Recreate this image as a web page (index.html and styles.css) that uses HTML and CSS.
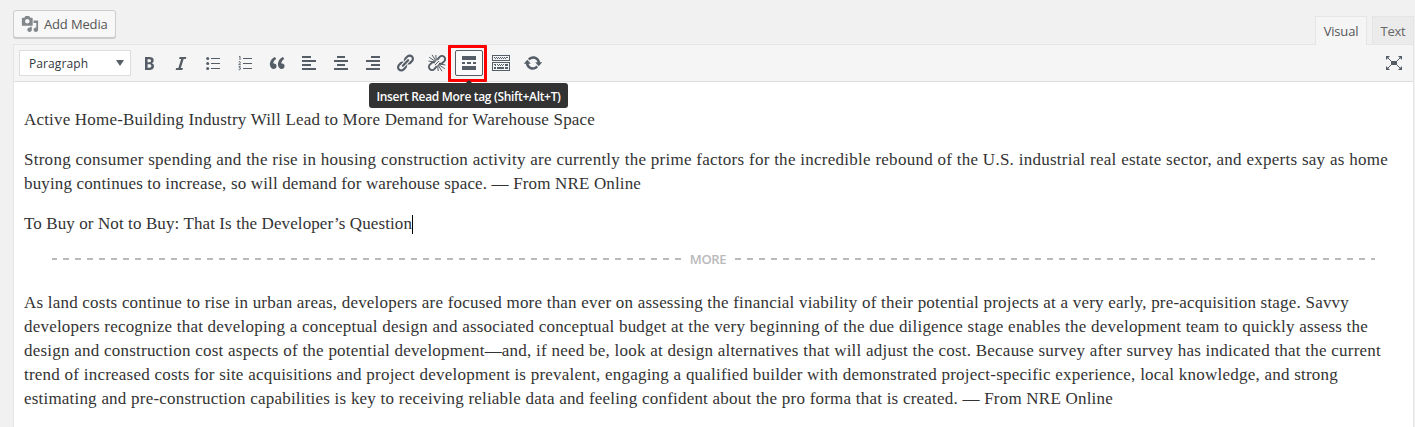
FILE: index.html
```html
<!DOCTYPE html>
<html lang="en">
<head>
<meta charset="utf-8">
<title>Edit Post</title>
<link rel="stylesheet" href="styles.css">
</head>
<body>
<div class="editor">
  <header class="editor-head">
    <button class="add-media"><svg viewBox="0 0 20 20"><path d="M13 11V4c0-.55-.45-1-1-1h-1.67L9 1H5L3.67 3H2c-.55 0-1 .45-1 1v7c0 .55.45 1 1 1h10c.55 0 1-.45 1-1zM7 4.5c1.38 0 2.5 1.12 2.5 2.5S8.38 9.5 7 9.5 4.5 8.38 4.5 7 5.62 4.5 7 4.5zM14 6h5v10.5c0 1.38-1.12 2.5-2.5 2.5S14 17.88 14 16.5s1.12-2.5 2.5-2.5c.17 0 .34.02.5.05V9h-3V6zm-4 8.05V13h2v3.5c0 1.38-1.12 2.5-2.5 2.5S7 17.88 7 16.5 8.12 14 9.5 14c.17 0 .34.02.5.05z"/></svg><span>Add Media</span></button>
    <nav class="tabs">
      <span class="tab tab-active">Visual</span>
      <span class="tab tab-text">Text</span>
    </nav>
  </header>
  <section class="panel">
    <div class="toolbar">
      <div class="format"><span>Paragraph</span><i class="caret-down"></i></div>
      <div class="tools">
        <span class="tool"><svg viewBox="0 0 20 20"><path d="M6 4v13h4.54c1.37 0 2.46-.33 3.26-1 .8-.66 1.2-1.58 1.2-2.77 0-.84-.17-1.51-.51-2.01s-.9-.85-1.67-1.03v-.09c.57-.1 1.02-.4 1.36-.9s.51-1.13.51-1.91c0-1.14-.39-1.98-1.17-2.5C12.75 4.26 11.5 4 9.78 4H6zm2.57 5.15V6.26h1.36c.73 0 1.27.11 1.61.32.34.22.51.58.51 1.07 0 .54-.16.92-.47 1.15s-.82.35-1.51.35h-1.5zm0 2.19h1.6c1.44 0 2.16.53 2.16 1.61 0 .6-.17 1.05-.51 1.34s-.86.43-1.57.43H8.57v-3.38z"/></svg></span>
        <span class="tool"><svg viewBox="0 0 20 20"><path d="M14.78 6h-2.13l-2.8 9h2.12l-.62 2H4.6l.62-2h2.14l2.8-9H8.03l.62-2h6.75z"/></svg></span>
        <span class="tool"><svg viewBox="0 0 20 20"><circle cx="4.700" cy="5.500" r="1.5"/><circle cx="4.700" cy="10.500" r="1.5"/><circle cx="4.700" cy="15.500" r="1.5"/><path d="M8 5h9v1H8zM8 10h9v1H8zM8 15h9v1H8z"/></svg></span>
        <span class="tool"><svg viewBox="0 0 20 20"><path d="M8 5h9v1H8zM8 10h9v1H8zM8 15h9v1H8z"/><path class="line" d="M4 4l1-.8V7M3.6 9q1.8-1 1.8.4Q5.4 10 3.8 11.6h2M3.6 13.6h1.8L4.4 15q1.4 0 1.2 1-.6 1.2-2 .6"/></svg></span>
        <span class="tool"><svg viewBox="0 0 20 20"><path d="M9.49 13.22c0-.74-.2-1.38-.61-1.9-.62-.78-1.83-.88-2.53-.72-.29-1.65 1.11-3.75 2.92-4.65L7.88 4c-2.73 1.3-5.42 4.28-4.96 8.05C3.21 14.43 4.59 16 6.54 16c.85 0 1.56-.25 2.12-.75s.83-1.18.83-2.03zm8.05 0c0-.74-.2-1.38-.61-1.9-.63-.78-1.83-.88-2.53-.72-.29-1.65 1.11-3.75 2.92-4.65L15.93 4c-2.73 1.3-5.41 4.28-4.95 8.05.29 2.38 1.66 3.95 3.61 3.95.85 0 1.56-.25 2.12-.75s.83-1.18.83-2.03z"/></svg></span>
        <span class="tool"><svg viewBox="0 0 20 20"><path d="M3 3h9v2H3zM3 7h14v2H3zM3 11h9v2H3zM3 15h14v2H3z"/></svg></span>
        <span class="tool"><svg viewBox="0 0 20 20"><path d="M6 3h8v2H6zM3 7h14v2H3zM6 11h8v2H6zM3 15h14v2H3z"/></svg></span>
        <span class="tool"><svg viewBox="0 0 20 20"><path d="M8 3h9v2H8zM3 7h14v2H3zM8 11h9v2H8zM3 15h14v2H3z"/></svg></span>
        <span class="tool"><svg viewBox="0 0 20 20"><path d="M17.74 2.76c1.68 1.69 1.68 4.41 0 6.1l-1.53 1.52c-1.12 1.12-2.7 1.47-4.14 1.09l2.62-2.61.76-.77.76-.76c.84-.84.84-2.2 0-3.04-.84-.85-2.2-.85-3.04 0l-.77.76-3.38 3.38c-.37-1.44-.02-3.02 1.1-4.14l1.52-1.53c1.69-1.68 4.42-1.68 6.1 0zM8.59 13.43l5.34-5.34c.42-.42.42-1.1 0-1.52-.44-.43-1.13-.39-1.53 0l-5.33 5.34c-.42.42-.42 1.1 0 1.52.44.43 1.13.39 1.52 0zm-.76 2.29l4.14-4.15c.38 1.44.03 3.02-1.09 4.14l-1.52 1.53c-1.69 1.68-4.41 1.68-6.1 0-1.68-1.68-1.68-4.42 0-6.1l1.53-1.52c1.12-1.12 2.7-1.47 4.14-1.1l-4.14 4.15c-.85.84-.85 2.2 0 3.05.84.84 2.2.84 3.04 0z"/></svg></span>
        <span class="tool"><svg viewBox="0 0 20 20"><path class="chain" d="M10.2 6.800l2.500-2.900a3.100 3.100 0 0 1 4.500 4.500l-2.700 2.300h-2.500M9.800 13.200l-2.500 2.900a3.100 3.100 0 0 1-4.500-4.500l2.700-2.300h2.500"/><path class="ray" d="M8.800 8.800L2.200 4.200M9 8L5 1.800M9.300 7.600L8.800 2M8 9.300L1.600 8M11.200 11.200l6.600 4.600M11 12l4 6.200M10.700 12.400l.5 5.600M12 10.700l6.400 1.300M8 12l4-4"/></svg></span>
        <span class="tool tool-active"><svg viewBox="0 0 20 20"><path d="M3 3h14v4H3zM3 9h3v2H3zM8 9h4v2H8zM14 9h3v2h-3zM3 13h14v4H3z"/></svg>
          <span class="marker"></span>
          <span class="tooltip">Insert Read More tag (Shift+Alt+T)</span>
        </span>
        <span class="tool"><svg viewBox="0 0 20 20"><path d="M19 2v6H1V2h18zm-1 5V3H2v4h16zM19 9v9H1V9h18zm-1 8v-7H2v7h16z"/><path d="M3 4h1v1H3zM5 4h1v1H5zM7 4h1v1H7zM9 4h1v1H9zM11 4h1v1h-1zM13 4h1v1h-1zM15 4h2v1h-2zM4 5h1v1H4zM6 5h1v1H6zM8 5h1v1H8zM10 5h1v1h-1zM12 5h1v1h-1zM14 5h1v1h-1zM3 11h2v1H3zM6 11h1v1H6zM8 11h1v1H8zM10 11h1v1h-1zM12 11h1v1h-1zM14 11h3v2h-3zM4 12h1v1H4zM7 12h1v1H7zM9 12h1v1H9zM11 12h1v1h-1zM3 14h2v2H3zM6 14h7v2H6zM14 14h3v2h-3z"/></svg></span>
        <span class="tool"><svg viewBox="0 0 20 20"><path d="M10.2 3.28c3.53 0 6.43 2.61 6.92 6h2.08l-3.5 4-3.5-4h2.32c-.45-1.97-2.21-3.45-4.32-3.45-1.45 0-2.73.71-3.54 1.78L4.95 5.66C6.23 4.2 8.11 3.28 10.2 3.28zm-.4 13.44c-3.52 0-6.43-2.61-6.92-6H.8l3.5-4c1.17 1.33 2.33 2.67 3.5 4H5.48c.45 1.97 2.21 3.45 4.32 3.45 1.45 0 2.73-.71 3.54-1.78l1.71 1.95c-1.28 1.46-3.15 2.38-5.25 2.38z"/></svg></span>
      </div>
      <span class="tool fullscreen"><svg viewBox="0 0 20 20"><path d="M7 8h6v4H7zM2 3h4L2 7zM18 3h-4l4 4zM2 17h4l-4-4zM18 17h-4l4-4z"/><path class="diag" d="M3.5 4.5l4 4M16.500 4.500l-4 4M3.500 15.500l4-4M16.500 15.500l-4-4"/></svg></span>
    </div>
    <article class="content">
      <p><span class="row w-title">Active Home-Building Industry Will Lead to More Demand for Warehouse Space</span></p>
      <p><span class="row w-s1">Strong consumer spending and the rise in housing construction activity are currently the prime factors for the incredible rebound of the U.S. industrial real estate sector, and experts say as home</span>
      <span class="row w-s2">buying continues to increase, so will demand for warehouse space. — From NRE Online</span></p>
      <p><span class="row w-buy">To Buy or Not to Buy: That Is the Developer’s Question</span></p>
      <div class="more"><i class="dash dash-left"></i><span>MORE</span><i class="dash"></i></div>
      <p><span class="row w-a1">As land costs continue to rise in urban areas, developers are focused more than ever on assessing the financial viability of their potential projects at a very early, pre-acquisition stage. Savvy</span>
      <span class="row w-a2">developers recognize that developing a conceptual design and associated conceptual budget at the very beginning of the due diligence stage enables the development team to quickly assess the</span>
      <span class="row w-a3">design and construction cost aspects of the potential development—and, if need be, look at design alternatives that will adjust the cost. Because survey after survey has indicated that the current</span>
      <span class="row w-a4">trend of increased costs for site acquisitions and project development is prevalent, engaging a qualified builder with demonstrated project-specific experience, local knowledge, and strong</span>
      <span class="row w-a5">estimating and pre-construction capabilities is key to receiving reliable data and feeling confident about the pro forma that is created. — From NRE Online</span></p>
    </article>
  </section>
</div>
</body>
</html>
```
FILE: styles.css
```css
* { box-sizing: border-box; }
html { overflow: hidden; }
body {
  margin: 0;
  height: 427px;
  overflow: hidden;
  background: #f1f1f1;
  font-family: "Open Sans", sans-serif;
  font-size: 13px;
  color: #555;
}
svg { display: block; width: 20px; height: 20px; fill: currentColor; }
.editor { width: 1401px; margin-left: 13px; }
.editor-head {
  display: flex;
  justify-content: space-between;
  height: 44px;
  padding-top: 10px;
}
.add-media {
  display: flex;
  align-items: center;
  width: 103px;
  height: 28px;
  padding: 0 0 0 7px;
  gap: 5px;
  border: 1px solid #ccc;
  border-radius: 3px;
  background: #f7f7f7;
  box-shadow: 0 1px 0 #ccc;
  color: #555;
  font: 13px "Open Sans", sans-serif;
  letter-spacing: -.15px;
  white-space: nowrap;
}
.add-media svg { width: 18px; height: 18px; color: #82878c; }
.tabs { display: flex; gap: 5px; padding-top: 6px; }
.tab {
  height: 28px;
  border: 1px solid #e5e5e5;
  border-bottom: 0;
  background: #ebebeb;
  line-height: 28px;
  color: #666;
  text-align: center;
  letter-spacing: -.2px;
}
.tab-active {
  position: relative;
  width: 52px;
  height: 29px;
  background: #f5f5f5;
  color: #555;
}
.tab-text { width: 42px; }
.panel {
  height: 383px;
  border: 1px solid #e5e5e5;
  border-bottom: 0;
  background: #fff;
}
.toolbar {
  display: flex;
  align-items: center;
  height: 37px;
  padding: 0 5px;
  border-bottom: 1px solid #ddd;
  background: #f5f5f5;
  color: #555d66;
}
.format {
  display: flex;
  align-items: center;
  justify-content: space-between;
  width: 112px;
  height: 26px;
  padding: 0 6px 0 9px;
  border: 1px solid #ddd;
  background: #fff;
  color: #32373c;
  font-size: 12px;
  letter-spacing: .1px;
}
.caret-down {
  border: 4px solid transparent;
  border-top: 6px solid #555d66;
  border-bottom: 0;
}
.tools { display: flex; gap: 4px; margin-left: 4px; }
.tool {
  position: relative;
  display: grid;
  place-items: center;
  width: 28px;
  height: 26px;
}
.fullscreen { margin-left: auto; }
.line { fill: none; stroke: currentColor; stroke-width: .9; }
.chain { fill: none; stroke: currentColor; stroke-width: 1.9; }
.ray { fill: none; stroke: currentColor; stroke-width: 1; }
.diag { stroke: currentColor; stroke-width: 1; }
.tool-active {
  border: 1px solid #555d66;
  border-radius: 2px;
  background: #fafafa;
}
.marker {
  position: absolute;
  left: -8px;
  top: -6px;
  width: 39px;
  height: 37px;
  border: 3px solid #f00;
  border-radius: 1px;
}
.tooltip {
  position: absolute;
  z-index: 2;
  left: -87px;
  top: 32px;
  width: 199px;
  height: 25px;
  border-radius: 3px;
  background: #333;
  color: #fff;
  font-size: 12px;
  font-weight: 600;
  line-height: 27px;
  letter-spacing: -.32px;
  text-align: center;
  white-space: nowrap;
}
.tooltip::before {
  content: "";
  position: absolute;
  left: 95px;
  top: -3px;
  border: 5px solid transparent;
  border-top: 0;
  border-bottom: 5px solid #333;
}
.content {
  padding: 26px 10px 0;
  color: #333;
  font: 17px/24px "Liberation Serif", serif;
}
.content p { margin: 0 0 16px; }
.row {
  display: block;
  height: 24px;
  text-align: justify;
  text-align-last: justify;
  white-space: nowrap;
}
.w-title { width: 571px; letter-spacing: .18px; }
.w-s1 { width: 1364px; letter-spacing: .26px; }
.w-s2 { width: 617px; letter-spacing: .14px; }
.w-buy {
  width: 389px;
  padding-right: 1px;
  letter-spacing: .1px;
  background: linear-gradient(#000, #000) right 3px / 1px 19px no-repeat;
}
.w-a1 { width: 1325px; letter-spacing: .2px; }
.w-a2 { width: 1344px; letter-spacing: .21px; }
.w-a3 { width: 1357px; letter-spacing: .22px; }
.w-a4 { width: 1314px; letter-spacing: .22px; }
.w-a5 { width: 1089px; letter-spacing: .2px; }
.more {
  display: flex;
  align-items: center;
  height: 16px;
  margin: 0 28px 24px;
  color: #b9b9bb;
  font: 600 13px/16px "Open Sans", sans-serif;
}
.content p + .more { margin-top: -1px; }
.more span { width: 54px; text-align: center; letter-spacing: -.3px; }
.dash {
  width: 640px;
  height: 2px;
  background: repeating-linear-gradient(90deg, #bababa 0 6px, transparent 6px 12px);
}
.dash-left { width: 629px; background-position: -1px 0; }
```
